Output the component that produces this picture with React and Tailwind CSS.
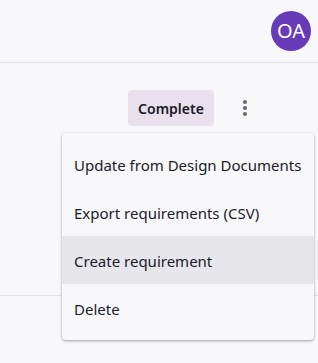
export default function App() {
  const items = [
    { label: "Update from Design Documents" },
    { label: "Export requirements (CSV)" },
    { label: "Create requirement", active: true },
    { label: "Delete" },
  ];
  return (
    <div
      className="relative w-[318px] h-[363px] bg-[#f8f8fb] overflow-hidden text-[#1a1a2a]"
      style={{ fontFamily: '"Noto Sans", "Open Sans", Arial, sans-serif' }}
    >
      <div className="h-[63px] border-b border-[#dfdfe6] flex items-center justify-end pr-[7px]">
        <div className="w-10 h-10 rounded-full bg-[#673ab7] text-white flex items-center justify-center text-[20px] leading-none">
          OA
        </div>
      </div>
      <div className="flex items-center pt-[27px] pl-[128px]">
        <div className="w-[86px] h-9 rounded bg-[#e8e0ec] flex items-center justify-center text-[14px] font-semibold">
          Complete
        </div>
        <div className="ml-[29px] w-1 flex flex-col items-center gap-[2.5px]">
          <span className="w-[3.5px] h-[3.5px] rounded-full bg-[#66637a]" />
          <span className="w-[3.5px] h-[3.5px] rounded-full bg-[#66637a]" />
          <span className="w-[3.5px] h-[3.5px] rounded-full bg-[#66637a]" />
        </div>
      </div>
      <div className="mt-[169px] border-t border-[#dfdfe6]" />
      <div className="absolute left-[62px] top-[133px] w-[252px] pt-[7px] pb-2 bg-[#f8f8fb] rounded shadow-[0_1px_3px_rgba(0,0,0,0.35)]">
        {items.map((it) => (
          <div
            key={it.label}
            className={`h-12 flex items-center px-3 pt-[2px] text-[15px] ${it.active ? "bg-[#e7e7eb]" : ""}`}
          >
            {it.label}
          </div>
        ))}
      </div>
    </div>
  );
}
